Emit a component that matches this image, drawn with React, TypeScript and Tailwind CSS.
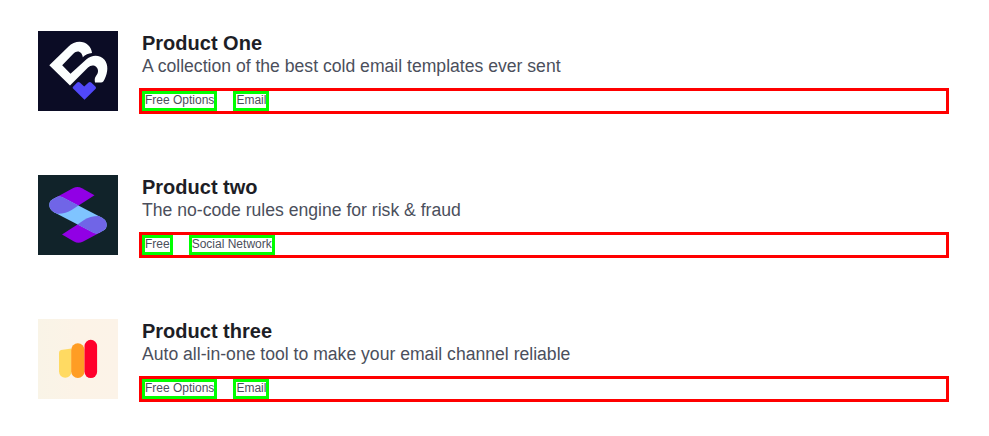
import React from "react";

function LogoOne() {
  return (
    <svg viewBox="0 0 80 80" className="block size-20 shrink-0">
      <rect width="80" height="80" fill="#0b0c25" />
      <path
        d="M11.3 34.2 L30.3 15.8 C36 10 44.5 9 50 14 C52.5 16.4 53.8 19.2 54 22 C50.5 22.3 47.3 23.8 44.8 26.3 C44.2 21 39.5 18.3 35.3 22.8 L24.2 34.2 L32.5 42.7 L48.5 28.3 C54 23.2 62 23.5 66.5 28.8 C70.5 34 70 41 66.8 47.8 C65.8 50 65 51.5 63 51.5 H57 C56.5 49 56.5 46.8 58 45 C60.5 42 60.8 38.5 58.3 36 C55.8 33.7 52.5 34.2 50 36.5 L32 54.5 Z"
        fill="#fbfefe"
      />
      <path
        d="M34.8 57.3 C34.5 56.6 34.7 56 35.3 55.5 L39.2 51.5 C40 50.8 41 50.8 41.8 51.5 L46.2 55.4 L50.6 51.5 C51.4 50.8 52.4 50.8 53.2 51.5 L57.4 55.5 C58.2 56.3 58.2 57.3 57.4 58.1 L46.5 68.8 Z"
        fill="#5148f8"
      />
    </svg>
  );
}

function LogoTwo() {
  return (
    <svg viewBox="0 0 80 80" className="block size-20 shrink-0">
      <rect width="80" height="80" fill="#11232a" />
      <path d="M56.5 20.3 L44 13.2 Q39.7 10.8 35.3 13 L17 23 L24 34 L32 36 Z" fill="#9100e5" />
      <path d="M24 59.5 L36 66.6 Q40.3 69 44.7 66.8 L63 57 L56 46 L48 44 Z" fill="#9100e5" />
      <path
        d="M11.3 30 Q11.3 26.2 15 24.1 L19.5 21.8 Q22 21 24.5 22.2 L64 42.7 Q68.7 45.3 68.7 49.9 Q68.7 53.7 65 55.8 L60.5 58.1 Q58 58.9 55.5 57.7 L16 37.2 Q11.3 34.5 11.3 30 Z"
        fill="#7fc4ff"
      />
      <path
        d="M11.3 30 Q11.3 26.2 15 24.1 L19.5 21.8 Q22 21 24.5 22.2 L40.5 30.5 L34 34.8 Q27.5 39 19.5 38.8 L16 37.2 Q11.3 34.5 11.3 30 Z"
        fill="#7065e7"
      />
      <path
        d="M68.7 49.9 Q68.7 53.7 65 55.8 L60.5 58.1 Q58 58.9 55.5 57.7 L39.5 49.4 L46 45.1 Q52.5 40.9 60.5 41 L64 42.7 Q68.7 45.3 68.7 49.9 Z"
        fill="#7065e7"
      />
    </svg>
  );
}

function LogoThree() {
  return (
    <svg viewBox="0 0 80 80" className="block size-20 shrink-0">
      <defs>
        <linearGradient id="cream" x1="0" y1="0" x2="1" y2="0">
          <stop offset="0" stopColor="#f9f4e7" />
          <stop offset="0.5" stopColor="#fcf3e7" />
          <stop offset="1" stopColor="#fcf3e8" />
        </linearGradient>
      </defs>
      <rect width="80" height="80" fill="url(#cream)" />
      <path d="M21 33.5 Q21 31.5 23 31 L33.5 29.5 V52.5 A6.2 6.2 0 0 1 21 52.5 Z" fill="#ffda62" />
      <rect x="33.2" y="24.3" width="13.3" height="34.7" rx="6.6" fill="#ff9d24" />
      <rect x="46.5" y="20.8" width="12.6" height="38.3" rx="6.3" fill="#ff002c" />
    </svg>
  );
}

interface Product {
  name: string;
  description: string;
  tags: string[];
  Logo: () => React.JSX.Element;
}

const products: Product[] = [
  {
    name: "Product One",
    description: "A collection of the best cold email templates ever sent",
    tags: ["Free Options", "Email"],
    Logo: LogoOne,
  },
  {
    name: "Product two",
    description: "The no-code rules engine for risk & fraud",
    tags: ["Free", "Social Network"],
    Logo: LogoTwo,
  },
  {
    name: "Product three",
    description: "Auto all-in-one tool to make your email channel reliable",
    tags: ["Free Options", "Email"],
    Logo: LogoThree,
  },
];

function ProductRow({ name, description, tags, Logo }: Product) {
  return (
    <article className="flex h-20 items-start gap-[21px]">
      <Logo />
      <div className="min-w-0 flex-1">
        <div className="pl-[3px]">
          <h2 className="text-[20px] leading-6 font-bold text-[#1d1e26]">{name}</h2>
          <p className="text-[17.6px] leading-[22px] text-[#4b4f5c]">{description}</p>
        </div>
        <div className="mt-[11px] flex h-[26px] gap-4 border-3 border-[#ff0000]">
          {tags.map((tag) => (
            <span
              key={tag}
              className="border-3 border-[#00ff00] text-[12px] leading-3 whitespace-nowrap text-[#4b4f5c]"
            >
              {tag}
            </span>
          ))}
        </div>
      </div>
    </article>
  );
}

export default function App() {
  return (
    <main className="flex h-[436px] flex-col gap-16 overflow-hidden bg-white pt-[31px] pr-10 pl-[38px] font-['Liberation_Sans',Arial,sans-serif]">
      {products.map((product) => (
        <ProductRow key={product.name} {...product} />
      ))}
    </main>
  );
}
